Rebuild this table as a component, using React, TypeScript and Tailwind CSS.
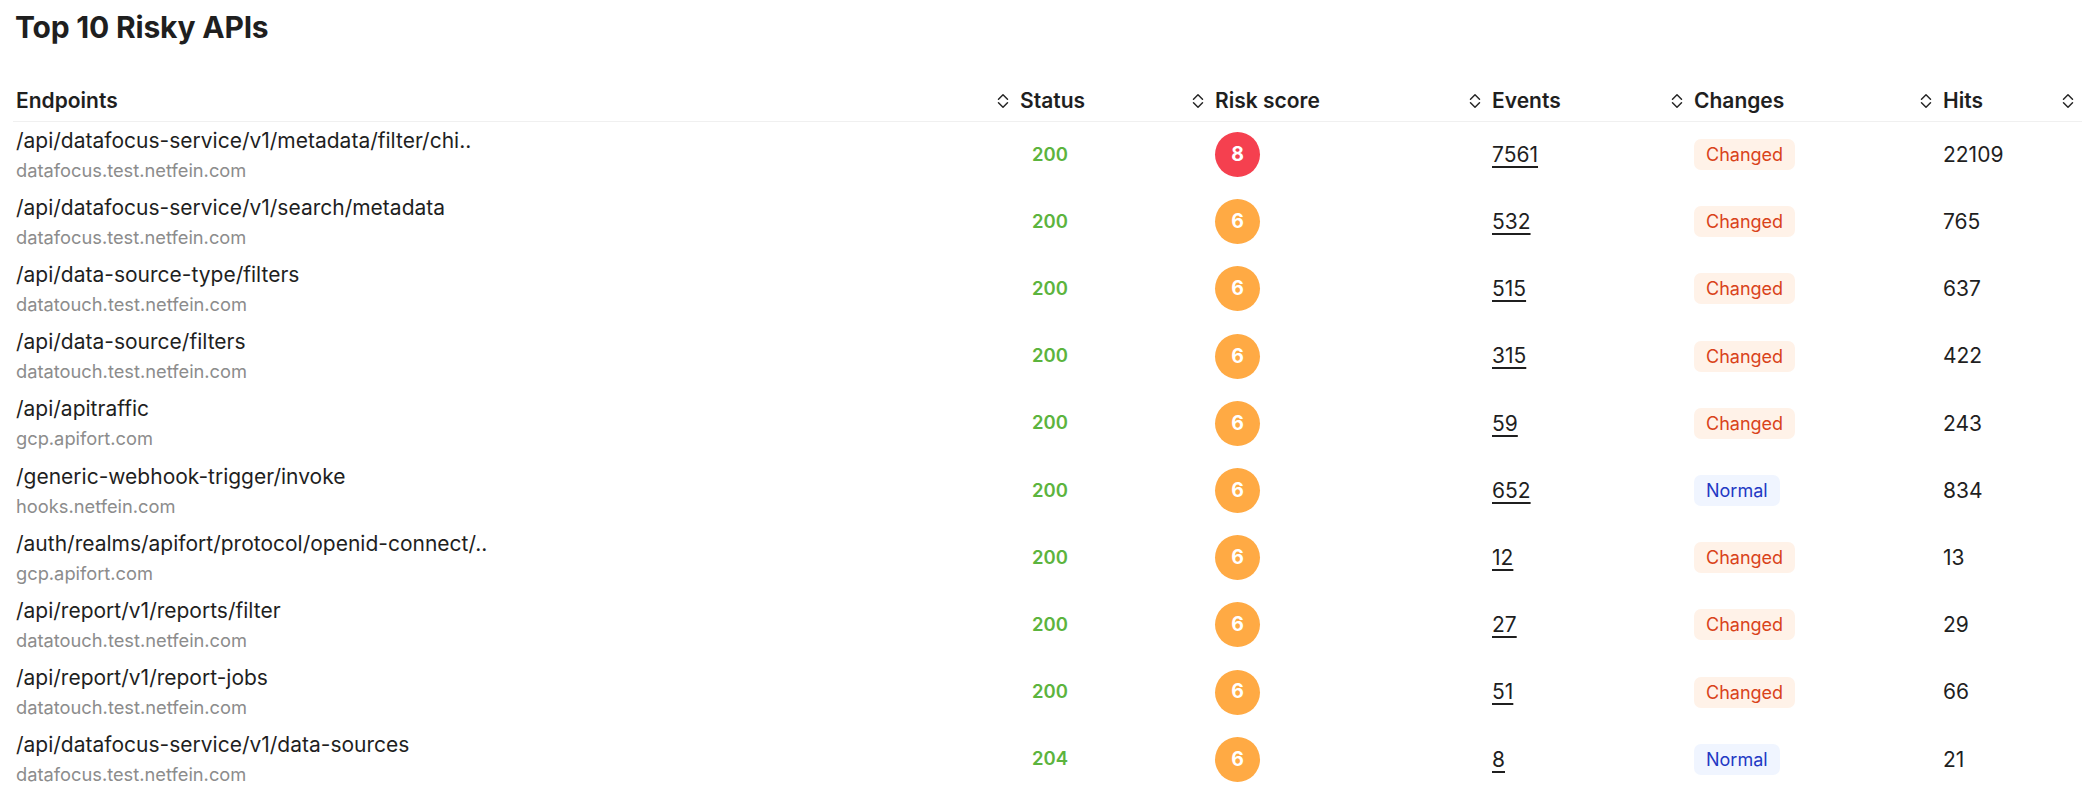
import React from 'react';

type Row = {
  path: string;
  host: string;
  status: number;
  risk: number;
  events: number;
  changed: boolean;
  hits: number;
};

const ROWS: Row[] = [
  { path: '/api/datafocus-service/v1/metadata/filter/chi..', host: 'datafocus.test.netfein.com', status: 200, risk: 8, events: 7561, changed: true, hits: 22109 },
  { path: '/api/datafocus-service/v1/search/metadata', host: 'datafocus.test.netfein.com', status: 200, risk: 6, events: 532, changed: true, hits: 765 },
  { path: '/api/data-source-type/filters', host: 'datatouch.test.netfein.com', status: 200, risk: 6, events: 515, changed: true, hits: 637 },
  { path: '/api/data-source/filters', host: 'datatouch.test.netfein.com', status: 200, risk: 6, events: 315, changed: true, hits: 422 },
  { path: '/api/apitraffic', host: 'gcp.apifort.com', status: 200, risk: 6, events: 59, changed: true, hits: 243 },
  { path: '/generic-webhook-trigger/invoke', host: 'hooks.netfein.com', status: 200, risk: 6, events: 652, changed: false, hits: 834 },
  { path: '/auth/realms/apifort/protocol/openid-connect/..', host: 'gcp.apifort.com', status: 200, risk: 6, events: 12, changed: true, hits: 13 },
  { path: '/api/report/v1/reports/filter', host: 'datatouch.test.netfein.com', status: 200, risk: 6, events: 27, changed: true, hits: 29 },
  { path: '/api/report/v1/report-jobs', host: 'datatouch.test.netfein.com', status: 200, risk: 6, events: 51, changed: true, hits: 66 },
  { path: '/api/datafocus-service/v1/data-sources', host: 'datafocus.test.netfein.com', status: 204, risk: 6, events: 8, changed: false, hits: 21 },
];

const COLUMNS = [
  { label: 'Endpoints', width: 'w-[1004px]' },
  { label: 'Status', width: 'w-[195px]' },
  { label: 'Risk score', width: 'w-[277px]' },
  { label: 'Events', width: 'w-[202px]' },
  { label: 'Changes', width: 'w-[249px]' },
  { label: 'Hits', width: 'w-[142px]' },
];

function SortIcon() {
  return (
    <svg width="12" height="16" viewBox="0 0 12 16" fill="none" stroke="#262626" strokeWidth="1.5" strokeLinecap="round" strokeLinejoin="round">
      <path d="M1.5 6.2 6 1.8l4.5 4.4" />
      <path d="M1.5 9.8 6 14.2l4.5-4.4" />
    </svg>
  );
}

export default function App() {
  return (
    <div className="min-h-[800px] bg-white pl-[13px] pr-[12px] pt-[9px] font-['Inter','Liberation_Sans',sans-serif] text-[#1f1f1f]">
      <h1 className="pl-[2px] text-[30px] font-bold leading-[36px] tracking-[-0.2px]">Top 10 Risky APIs</h1>
      <table className="mt-[36px] w-full table-fixed border-collapse text-left">
        <thead>
          <tr className="h-[40px] border-b border-[#f0f0f0]">
            {COLUMNS.map((c) => (
              <th key={c.label} className={`${c.width} p-0 font-semibold`}>
                <div className="flex items-center justify-between pl-[3px] pr-[8px] text-[21px] leading-[28px]">
                  <span>{c.label}</span>
                  <SortIcon />
                </div>
              </th>
            ))}
          </tr>
        </thead>
        <tbody>
          {ROWS.map((r, i) => (
            <tr key={i} className="h-[67.2px]">
              <td className="pl-[3px] align-middle">
                <div className="text-[21px] leading-[30px]">{r.path}</div>
                <div className="text-[18.3px] leading-[28px] text-[#8c8c8c]">{r.host}</div>
              </td>
              <td className="pl-[3px] align-middle">
                <span className="px-[12px] text-[18.5px] font-semibold text-[#5cb43e]">{r.status}</span>
              </td>
              <td className="pl-[3px] align-middle">
                <div
                  className={`flex h-[45px] w-[45px] items-center justify-center rounded-full text-[19.5px] font-bold text-white ${
                    r.risk >= 8 ? 'bg-[#f5404f]' : 'bg-[#ffaa44]'
                  }`}
                >
                  {r.risk}
                </div>
              </td>
              <td className="pl-[3px] align-middle">
                <span className="text-[21px] underline decoration-[1.5px] underline-offset-[4px]">{r.events}</span>
              </td>
              <td className="pl-[3px] align-middle">
                {r.changed ? (
                  <span className="inline-flex h-[31px] items-center rounded-[7px] bg-[#fff2e8] px-[12px] text-[18px] text-[#d9421a]">
                    Changed
                  </span>
                ) : (
                  <span className="inline-flex h-[31px] items-center rounded-[7px] bg-[#f0f5ff] px-[12px] text-[18px] text-[#2339c4]">
                    Normal
                  </span>
                )}
              </td>
              <td className="pl-[3px] align-middle text-[21px]">{r.hits}</td>
            </tr>
          ))}
        </tbody>
      </table>
    </div>
  );
}
